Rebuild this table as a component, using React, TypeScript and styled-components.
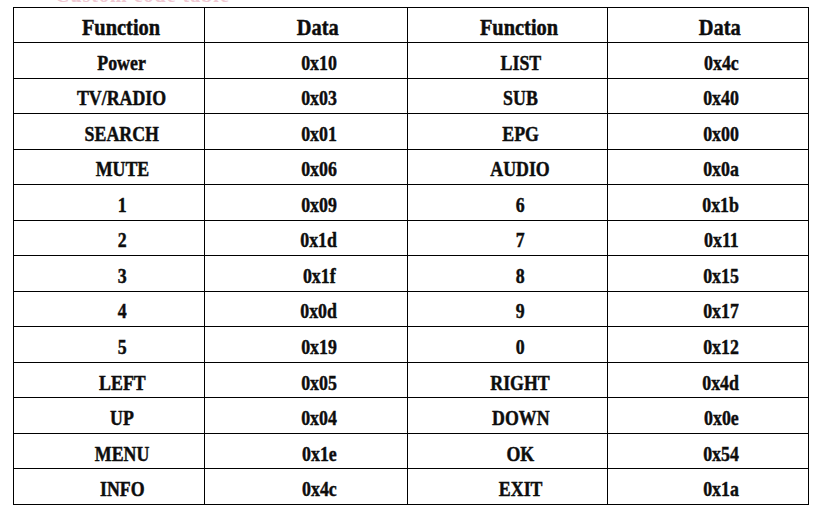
import React from 'react';
import styled, { createGlobalStyle } from 'styled-components';

const GlobalStyle = createGlobalStyle`
    html, body {
        margin: 0;
        padding: 0;
        background: #ffffff;
    }
    body {
        font-family: "Liberation Serif", "Times New Roman", serif;
    }
`;

const Sheet = styled.div`
    width: 814px;
    height: 510px;
    padding: 0 6px 0 13px;
    box-sizing: border-box;
    overflow: hidden;
`;

// the page heading is cut off by the top of the picture, only its feet show
const Caption = styled.div`
    height: 7px;
    overflow: hidden;
    padding-left: 42px;
    font-size: 20px;
    font-weight: bold;
    line-height: 20px;
`;

const CaptionText = styled.span`
    display: block;
    margin-top: -15px;
    letter-spacing: 1px;
    color: #efc9d3;
`;

const Table = styled.table`
    border-collapse: collapse;
    table-layout: fixed;
    width: 795px;
    height: 498px;
    color: #0d0d0d;
`;

const Th = styled.th`
    box-sizing: border-box;
    height: 35px;
    padding: 3px 0 0 24px;
    border: 1px solid #000;
    font-size: 24px;
    font-weight: bold;
    text-align: center;
    vertical-align: middle;
    line-height: 24px;
    -webkit-text-stroke: 0.5px #0d0d0d;
`;

const Td = styled.td`
    box-sizing: border-box;
    height: 35px;
    padding: 6px 0 0 26px;
    border: 1px solid #000;
    font-size: 21px;
    font-weight: bold;
    text-align: center;
    vertical-align: middle;
    line-height: 21px;
    -webkit-text-stroke: 0.45px #0d0d0d;
`;

const Squeezed = styled.span`
    display: inline-block;
    transform: scaleX(0.85);
    white-space: nowrap;
`;

const widths = [191, 203, 200, 201];

const rows: [string, string, string, string][] = [
    ['Power', '0x10', 'LIST', '0x4c'],
    ['TV/RADIO', '0x03', 'SUB', '0x40'],
    ['SEARCH', '0x01', 'EPG', '0x00'],
    ['MUTE', '0x06', 'AUDIO', '0x0a'],
    ['1', '0x09', '6', '0x1b'],
    ['2', '0x1d', '7', '0x11'],
    ['3', '0x1f', '8', '0x15'],
    ['4', '0x0d', '9', '0x17'],
    ['5', '0x19', '0', '0x12'],
    ['LEFT', '0x05', 'RIGHT', '0x4d'],
    ['UP', '0x04', 'DOWN', '0x0e'],
    ['MENU', '0x1e', 'OK', '0x54'],
    ['INFO', '0x4c', 'EXIT', '0x1a']
];

const headings = ['Function', 'Data', 'Function', 'Data'];

export default function App() {
    return (
        <>
            <GlobalStyle />
            <Sheet>
                <Caption>
                    <CaptionText>Custom code table</CaptionText>
                </Caption>
                <Table>
                    <colgroup>
                        {widths.map((w, i) => (
                            <col key={i} style={{ width: w }} />
                        ))}
                    </colgroup>
                    <thead>
                        <tr>
                            {headings.map((h, i) => (
                                <Th key={i}>
                                    <Squeezed>{h}</Squeezed>
                                </Th>
                            ))}
                        </tr>
                    </thead>
                    <tbody>
                        {rows.map((row) => (
                            <tr key={row[0]}>
                                {row.map((cell, i) => (
                                    <Td key={i}>
                                        <Squeezed>{cell}</Squeezed>
                                    </Td>
                                ))}
                            </tr>
                        ))}
                    </tbody>
                </Table>
            </Sheet>
        </>
    );
}
